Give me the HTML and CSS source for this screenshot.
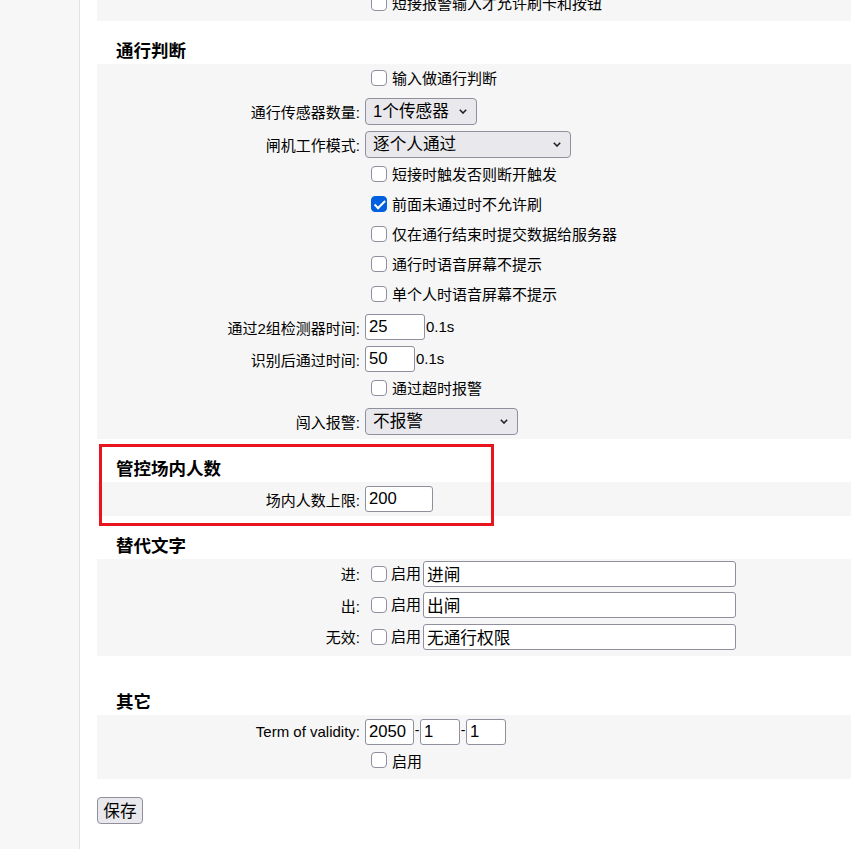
FILE: index.html
```html
<!DOCTYPE html>
<html lang="zh-CN">
<head>
  <meta charset="UTF-8" />
  <meta name="viewport" content="width=device-width, initial-scale=1.0"/>
  <title>闸机设置</title>
  <link rel="stylesheet" href="styles.css">
</head>
<body>
<div class="page">
  <!-- left menu column (empty in this view) -->
  <div class="sidebar"></div>

  <div class="main">
    <!-- tail of the previous group, scrolled partly out of view -->
    <div class="panel top">
      <div class="row">
        <span></span>
        <label class="value"><input type="checkbox">短接报警输入才允许刷卡和按钮</label>
      </div>
    </div>

    <h3 class="title">通行判断</h3>
    <div class="panel">
      <div class="row">
        <span></span>
        <label class="value"><input type="checkbox">输入做通行判断</label>
      </div>
      <div class="row sel">
        <span class="label">通行传感器数量:</span>
        <div class="value">
          <span class="select">
            <select class="w-sensor"><option>1个传感器</option><option>2个传感器</option></select>
            <svg class="chev" viewBox="0 0 8 5"><path d="M0.8 0.8 L4 4 L7.2 0.8" /></svg>
          </span>
        </div>
      </div>
      <div class="row sel">
        <span class="label">闸机工作模式:</span>
        <div class="value">
          <span class="select">
            <select class="w-mode"><option>逐个人通过</option><option>多人通过</option></select>
            <svg class="chev" viewBox="0 0 8 5"><path d="M0.8 0.8 L4 4 L7.2 0.8" /></svg>
          </span>
        </div>
      </div>
      <div class="row">
        <span></span>
        <label class="value"><input type="checkbox">短接时触发否则断开触发</label>
      </div>
      <div class="row">
        <span></span>
        <label class="value"><input type="checkbox" checked>前面未通过时不允许刷</label>
      </div>
      <div class="row">
        <span></span>
        <label class="value"><input type="checkbox">仅在通行结束时提交数据给服务器</label>
      </div>
      <div class="row">
        <span></span>
        <label class="value"><input type="checkbox">通行时语音屏幕不提示</label>
      </div>
      <div class="row">
        <span></span>
        <label class="value"><input type="checkbox">单个人时语音屏幕不提示</label>
      </div>
      <div class="row txt">
        <span class="label">通过2组检测器时间:</span>
        <div class="value"><input type="text" class="w-60" value="25"><span class="unit">0.1s</span></div>
      </div>
      <div class="row txt">
        <span class="label">识别后通过时间:</span>
        <div class="value"><input type="text" class="w-50" value="50"><span class="unit">0.1s</span></div>
      </div>
      <div class="row">
        <span></span>
        <label class="value"><input type="checkbox">通过超时报警</label>
      </div>
      <div class="row sel">
        <span class="label">闯入报警:</span>
        <div class="value">
          <span class="select">
            <select class="w-alarm"><option>不报警</option><option>报警</option></select>
            <svg class="chev" viewBox="0 0 8 5"><path d="M0.8 0.8 L4 4 L7.2 0.8" /></svg>
          </span>
        </div>
      </div>
    </div>

    <div class="section">
      <h3 class="title">管控场内人数</h3>
      <div class="panel">
        <div class="row txt">
          <span class="label">场内人数上限:</span>
          <div class="value"><input type="text" class="w-68" value="200"></div>
        </div>
      </div>
      <!-- highlight frame drawn over the group -->
      <div class="mark"></div>
    </div>

    <h3 class="title">替代文字</h3>
    <div class="panel">
      <div class="row alt">
        <span class="label">进:</span>
        <div class="value"><input type="checkbox"><span class="enable">启用</span><input type="text" class="w-alt" value="进闸"></div>
      </div>
      <div class="row alt">
        <span class="label">出:</span>
        <div class="value"><input type="checkbox"><span class="enable">启用</span><input type="text" class="w-alt" value="出闸"></div>
      </div>
      <div class="row alt">
        <span class="label">无效:</span>
        <div class="value"><input type="checkbox"><span class="enable">启用</span><input type="text" class="w-alt" value="无通行权限"></div>
      </div>
    </div>

    <h3 class="title far">其它</h3>
    <div class="panel">
      <div class="row txt">
        <span class="label">Term of validity:</span>
        <div class="value">
          <input type="text" class="w-49" value="2050"><span class="dash">-</span><input type="text" class="w-40" value="1"><span class="dash">-</span><input type="text" class="w-40" value="1">
        </div>
      </div>
      <div class="row">
        <span></span>
        <label class="value"><input type="checkbox">启用</label>
      </div>
    </div>

    <button class="save">保存</button>
  </div>
</div>
</body>
</html>
```

FILE: styles.css
```css
body {
  margin: 0;
  font-family: "Liberation Sans", "Noto Sans CJK SC", sans-serif;
  font-size: 15px;
  color: #000;
  background-color: #fff;
  overflow: hidden;
}
.page {
  display: flex;
  min-height: 100vh;
}
/* Left column */
.sidebar {
  width: 79px;
  flex: none;
  background-color: #f7f7f7;
  border-right: 1px solid #e2e2e2;
}
.main {
  flex: 1;
  padding-left: 17px;
  margin-top: -11px;
}
/* Group headings */
.title {
  margin: 0;
  padding: 20px 0 2px 19px;
  font-size: 17.5px;
  line-height: 21px;
  font-weight: bold;
}
.title.far {
  padding-top: 36px;
}
/* Gray group body */
.panel {
  background-color: #f6f6f6;
  padding: 1px 0;
}
.row {
  display: grid;
  grid-template-columns: 263px 1fr;
  column-gap: 5px;
  align-items: center;
  height: 30px;
}
.row.sel {
  height: 33px;
}
.row.txt {
  height: 32px;
}
.row.alt {
  height: 31.5px;
}
.row.alt > * {
  margin-bottom: 4px;
}
.label {
  text-align: right;
  white-space: nowrap;
}
.value {
  display: flex;
  align-items: center;
  white-space: nowrap;
}
label.value {
  margin-bottom: 5px;
}
/* Checkboxes */
input[type="checkbox"] {
  appearance: none;
  -webkit-appearance: none;
  position: relative;
  width: 16px;
  height: 16px;
  min-width: 16px;
  margin: 0 5px 0 6px;
  border: 1px solid #8f8f9d;
  border-radius: 4px;
  background-color: #fff;
  box-sizing: border-box;
  flex: none;
}
input[type="checkbox"]:checked {
  background-color: #0060df;
  border-color: #0060df;
}
input[type="checkbox"]:checked::after {
  content: "";
  position: absolute;
  left: 4.5px;
  top: 1px;
  width: 4px;
  height: 8.5px;
  border: solid #fff;
  border-width: 0 2.5px 2.5px 0;
  transform: rotate(45deg);
}
.enable {
  margin-left: -1px;
  margin-right: 2px;
  margin-top: -3px;
}
/* Text fields */
input[type="text"] {
  height: 26px;
  padding: 0 3px;
  border: 1px solid #8f8f9d;
  border-radius: 3px;
  background-color: #fff;
  font-family: inherit;
  font-size: 16.67px;
  color: #000;
  box-sizing: border-box;
  margin: 0;
}
.w-60 { width: 60px; }
.w-50 { width: 50px; }
.w-68 { width: 68px; }
.w-49 { width: 49px; }
.w-40 { width: 40px; }
.w-alt { width: 313px; }
.unit {
  margin-left: 1px;
  margin-top: -1px;
}
.dash {
  width: 6px;
  text-align: center;
  font-size: 14px;
  margin-top: -4px;
}
/* Drop-downs */
.select {
  position: relative;
  display: inline-block;
  height: 27px;
}
.select select {
  appearance: none;
  -webkit-appearance: none;
  height: 27px;
  padding: 0 7px;
  margin: 0;
  border: 1px solid #8f8f9d;
  border-radius: 4px;
  background-color: #e9e9ed;
  font-family: inherit;
  font-size: 16.67px;
  color: #000;
}
.w-sensor { width: 112px; }
.w-mode { width: 206px; }
.w-alarm { width: 153px; }
.chev {
  position: absolute;
  right: 10px;
  top: 11px;
  width: 8px;
  height: 5px;
  fill: none;
  stroke: #222;
  stroke-width: 1.6;
  pointer-events: none;
}
/* Highlight frame */
.section {
  position: relative;
}
.mark {
  position: absolute;
  left: 2px;
  top: 5px;
  width: 395px;
  height: 82px;
  border: 3px solid #e8141e;
  box-sizing: border-box;
  pointer-events: none;
}
/* Save button */
.save {
  margin-top: 18px;
  height: 27px;
  width: 46px;
  padding: 0;
  border: 1px solid #8f8f9d;
  border-radius: 4px;
  background-color: #e9e9ed;
  font-family: inherit;
  font-size: 16.67px;
  color: #000;
}
```
